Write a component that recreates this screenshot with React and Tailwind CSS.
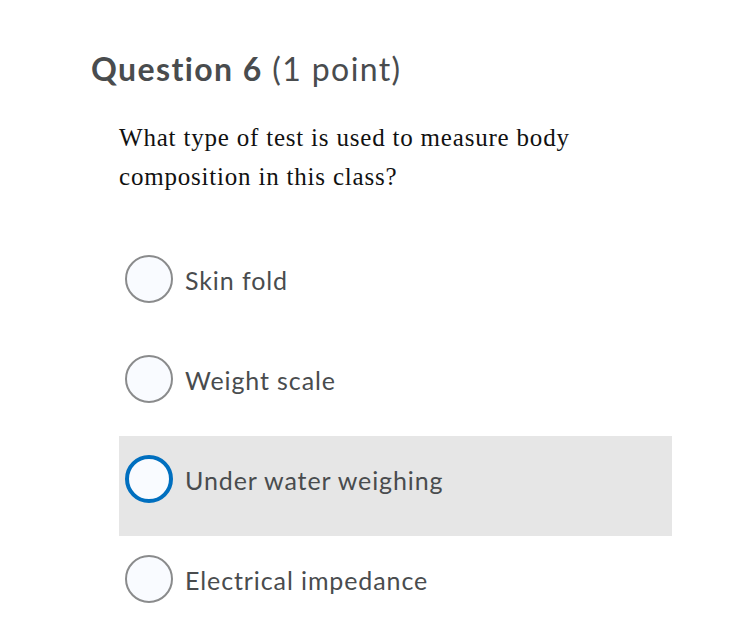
import React from 'react';

const options = [
  { id: 'a', label: 'Skin fold' },
  { id: 'b', label: 'Weight scale' },
  { id: 'c', label: 'Under water weighing', focused: true },
  { id: 'd', label: 'Electrical impedance' },
];

const App = () => {
  return (
    <div className="min-h-screen w-[750px] h-[636px] overflow-hidden bg-white">
      <div className="pt-[49px] pl-[91px]">
        {/* Question heading */}
        <h2 className="text-[32px] leading-[40px] tracking-[1.4px] text-[#494c4e] font-['Lato',sans-serif]">
          <span className="font-bold">Question 6</span> <span className="font-normal">(1 point)</span>
        </h2>

        {/* Question body */}
        <p className="mt-[29px] ml-[28px] w-[470px] text-[25px] leading-[39px] tracking-[0.8px] text-[#111] font-['Liberation_Serif',serif]">
          What type of test is used to measure body composition in this class?
        </p>

        {/* Answer options */}
        <div className="mt-[40px] ml-[28px] w-[553px]">
          {options.map((opt) => (
            <div
              key={opt.id}
              className={`h-[100px] flex items-start pl-[6px] pt-[19px] ${opt.focused ? 'bg-[#e6e6e6]' : ''}`}
            >
              <div
                className={`w-[48px] h-[48px] shrink-0 rounded-full bg-[#f9fbff] ${
                  opt.focused ? 'border-[4px] border-[#006fbf]' : 'border-2 border-[#8a8b8c]'
                }`}
              />
              <span className="ml-[12px] mt-[10px] text-[25px] leading-[30px] tracking-[0.9px] text-[#494c4e] font-['Lato',sans-serif]">
                {opt.label}
              </span>
            </div>
          ))}
        </div>
      </div>
    </div>
  );
};

export default App;
